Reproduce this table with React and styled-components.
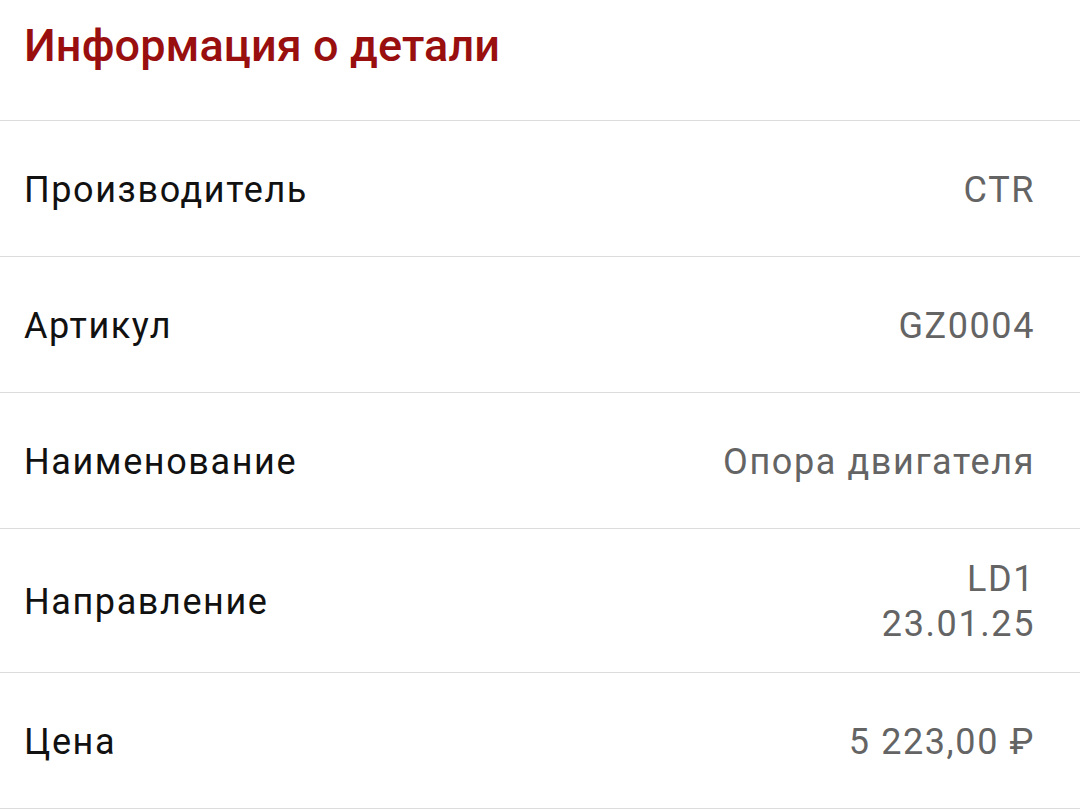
import React from "react";
import styled, { createGlobalStyle } from "styled-components";

const Global = createGlobalStyle`
  html, body { margin: 0; padding: 0; background: #fff; }
  body { font-family: Roboto, "Noto Sans", sans-serif; -webkit-font-smoothing: antialiased; }
`;

const Page = styled.div`
  width: 1080px;
  background: #fff;
`;

const Header = styled.header`
  height: 121px;
  padding: 0 24px 29px;
  display: flex;
  align-items: center;
  border-bottom: 1px solid #dcdcdc;
  box-sizing: border-box;
`;

const Title = styled.h1`
  margin: 0;
  font-size: 45px;
  font-weight: 500;
  color: #990f0f;
  letter-spacing: 0.1px;
`;

const Row = styled.div`
  display: flex;
  align-items: center;
  justify-content: space-between;
  min-height: 136px;
  padding: 28px 45px 25px 24px;
  box-sizing: border-box;
  border-bottom: 1px solid #dcdcdc;
  font-size: 36px;
  line-height: 45px;
  letter-spacing: 1.6px;
`;

const Label = styled.span`
  color: #111;
`;

const Value = styled.span`
  color: #646464;
  text-align: right;
  white-space: pre-line;
`;

const rows = [
  ["Производитель", "CTR"],
  ["Артикул", "GZ0004"],
  ["Наименование", "Опора двигателя"],
  ["Направление", "LD1\n23.01.25"],
  ["Цена", "5 223,00 ₽"],
];

export default function App() {
  return (
    <Page>
      <Global />
      <Header>
        <Title>Информация о детали</Title>
      </Header>
      {rows.map(([l, v]) => (
        <Row key={l}>
          <Label>{l}</Label>
          <Value>{v}</Value>
        </Row>
      ))}
    </Page>
  );
}
